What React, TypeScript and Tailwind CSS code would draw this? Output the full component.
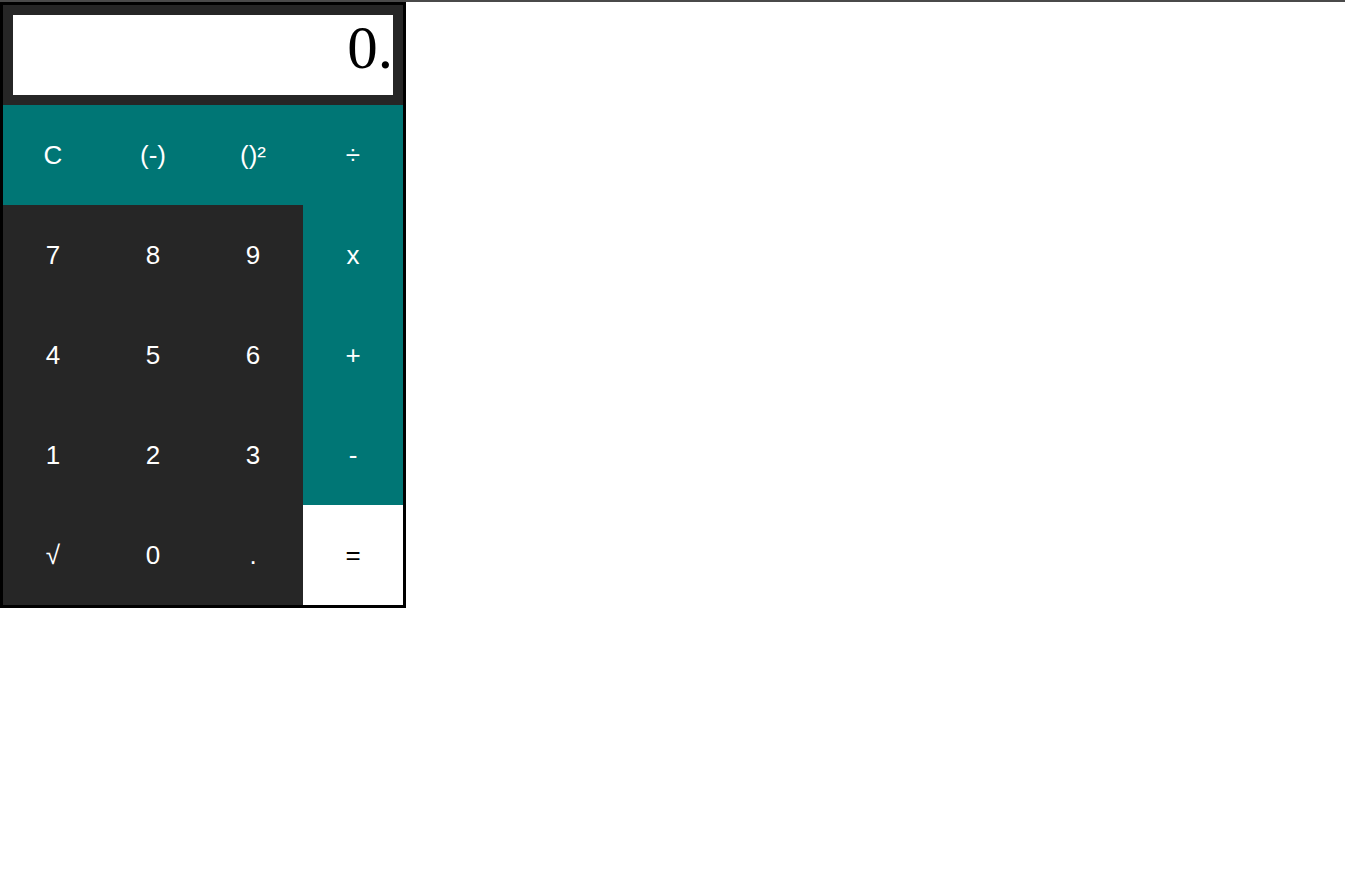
const rows = [
  [
    { label: 'C', kind: 'op' },
    { label: '(-)', kind: 'op' },
    { label: '()²', kind: 'op' },
    { label: '÷', kind: 'op' },
  ],
  [
    { label: '7', kind: 'num' },
    { label: '8', kind: 'num' },
    { label: '9', kind: 'num' },
    { label: 'x', kind: 'op' },
  ],
  [
    { label: '4', kind: 'num' },
    { label: '5', kind: 'num' },
    { label: '6', kind: 'num' },
    { label: '+', kind: 'op' },
  ],
  [
    { label: '1', kind: 'num' },
    { label: '2', kind: 'num' },
    { label: '3', kind: 'num' },
    { label: '-', kind: 'op' },
  ],
  [
    { label: '√', kind: 'num' },
    { label: '0', kind: 'num' },
    { label: '.', kind: 'num' },
    { label: '=', kind: 'eq' },
  ],
];

const kindClass: Record<string, string> = {
  num: 'bg-[#262626] text-white',
  op: 'bg-[#007675] text-white',
  eq: 'bg-white text-black',
};

const App = () => {
  return (
    <div className="min-h-screen bg-white border-t-2 border-[#4a4a4a]">
      <div className="w-[406px] border-[3px] border-black">
        {/* Display */}
        <div className="bg-[#262626] p-[10px]">
          <div className="h-[80px] bg-white flex items-start justify-end overflow-hidden pt-[2px]">
            <span className="text-[61px] leading-none text-black font-['Liberation_Serif','Times_New_Roman',serif]">
              0.
            </span>
          </div>
        </div>

        {/* Keypad */}
        <div className="grid grid-cols-4">
          {rows.flat().map((key, idx) => (
            <button
              key={idx}
              className={`h-[100px] flex items-center justify-center text-[26px] font-['Liberation_Sans',Arial,sans-serif] ${kindClass[key.kind]}`}
            >
              {key.label}
            </button>
          ))}
        </div>
      </div>
    </div>
  );
};

export default App;
